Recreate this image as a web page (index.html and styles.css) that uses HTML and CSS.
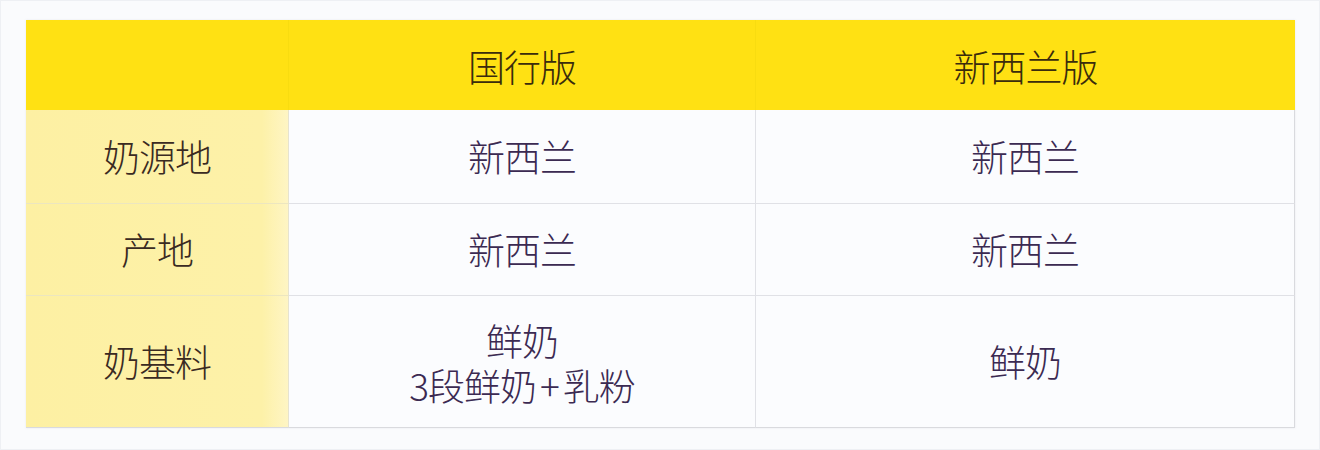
FILE: index.html
```html
<!DOCTYPE html>
<html lang="zh-CN">
<head>
<meta charset="utf-8">
<title>对比表</title>
<link rel="stylesheet" href="styles.css">
</head>
<body>
<div class="page">
  <div class="table">
    <div class="cell head corner"></div>
    <div class="cell head">国行版</div>
    <div class="cell head last">新西兰版</div>

    <div class="cell label">奶源地</div>
    <div class="cell val">新西兰</div>
    <div class="cell val last">新西兰</div>

    <div class="cell label">产地</div>
    <div class="cell val">新西兰</div>
    <div class="cell val last">新西兰</div>

    <div class="cell label bottom">奶基料</div>
    <div class="cell val bottom multi"><span class="line">鲜奶</span><span class="line">3段鲜奶<span class="plus">+</span>乳粉</span></div>
    <div class="cell val bottom last">鲜奶</div>
  </div>
</div>
</body>
</html>
```

FILE: styles.css
```css
html, body {
  margin: 0;
  padding: 0;
  background: #fafbfd;
}

.page {
  box-sizing: border-box;
  width: 1320px;
  height: 450px;
  border: 1px solid #eef0f4;
  background: #fafbfd;
  padding: 19px 0 0 25px;
}

.table {
  display: grid;
  grid-template-columns: 263px 467px 539px;
  grid-template-rows: 90px 94px 92px 132px;
  width: 1269px;
  box-shadow: 0 0 2px rgba(200, 200, 210, 0.35);
}

.cell {
  display: flex;
  align-items: center;
  justify-content: center;
  font-family: "Noto Sans CJK SC", "Noto Sans", sans-serif;
  font-size: 37px;
  font-weight: 300;
  letter-spacing: -1px;
  line-height: 45px;
  box-sizing: border-box;
  border-right: 1px solid #e0e1e6;
  border-bottom: 1px solid #e0e1e6;
}

.cell.last {
  border-right: 1px solid #d9dade;
}

.head {
  background: #ffe113;
  color: #3a2c0c;
  border-right: 1px solid #f8dc10;
  border-bottom: none;
  padding-top: 2px;
}

.head.last {
  border-right: none;
}

.label {
  background: linear-gradient(90deg, #fdf0a3 0%, #fdf1a8 90%, #fef5c4 100%);
  color: #3a2a22;
  border-right: 1px solid #e6e3cf;
  border-bottom: 1px solid #ece6c0;
}

.val {
  background: #fbfcfe;
  color: #3b2a52;
}

.bottom {
  border-bottom: 1px solid #d9dade;
}

.multi {
  flex-direction: column;
  padding-top: 2px;
}

.line {
  display: block;
  height: 45px;
}

.plus {
  margin: 0 4px;
  font-weight: 300;
}
```
